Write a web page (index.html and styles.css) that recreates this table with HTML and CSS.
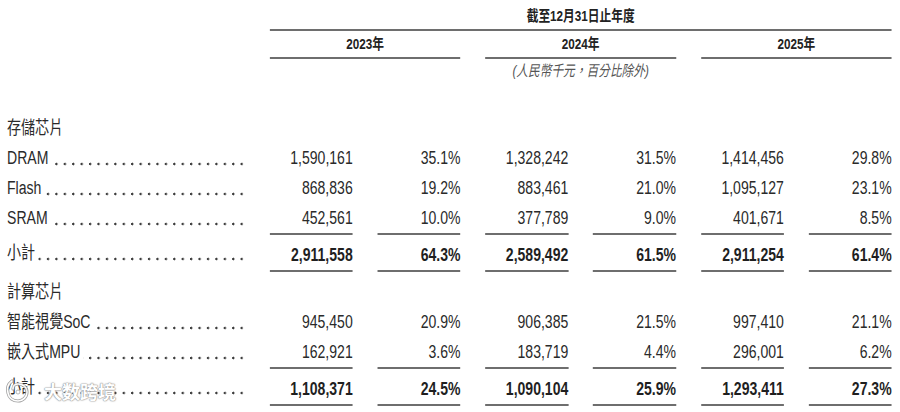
FILE: index.html
```html
<!DOCTYPE html>
<html lang="zh-Hant">
<head>
<meta charset="utf-8">
<title>收入明細</title>
<link rel="stylesheet" href="styles.css">
</head>
<body>
<div class="frame">
<div class="sheet">
  <div class="row head-title">
    <div class="title">截至12月31日止年度</div>
  </div>
  <div class="row head-years">
    <div class="year y1">2023年</div>
    <div class="year y2">2024年</div>
    <div class="year y3">2025年</div>
  </div>
  <div class="row head-unit">
    <div class="unit">(人民幣千元，百分比除外)</div>
  </div>

  <div class="section first">
    <div class="row cat"><div class="label">存儲芯片</div></div>
    <div class="row">
      <div class="label"><span class="name">DRAM</span><span class="dots"></span></div>
      <div class="num">1,590,161</div><div class="num">35.1%</div>
      <div class="num">1,328,242</div><div class="num">31.5%</div>
      <div class="num">1,414,456</div><div class="num">29.8%</div>
    </div>
    <div class="row">
      <div class="label"><span class="name">Flash</span><span class="dots"></span></div>
      <div class="num">868,836</div><div class="num">19.2%</div>
      <div class="num">883,461</div><div class="num">21.0%</div>
      <div class="num">1,095,127</div><div class="num">23.1%</div>
    </div>
    <div class="row">
      <div class="label"><span class="name">SRAM</span><span class="dots"></span></div>
      <div class="num">452,561</div><div class="num">10.0%</div>
      <div class="num">377,789</div><div class="num">9.0%</div>
      <div class="num">401,671</div><div class="num">8.5%</div>
    </div>
    <div class="row total">
      <div class="label"><span class="name">小計</span><span class="dots"></span></div>
      <div class="num">2,911,558</div><div class="num">64.3%</div>
      <div class="num">2,589,492</div><div class="num">61.5%</div>
      <div class="num">2,911,254</div><div class="num">61.4%</div>
    </div>
  </div>

  <div class="section second">
    <div class="row cat"><div class="label">計算芯片</div></div>
    <div class="row">
      <div class="label"><span class="name">智能視覺SoC</span><span class="dots"></span></div>
      <div class="num">945,450</div><div class="num">20.9%</div>
      <div class="num">906,385</div><div class="num">21.5%</div>
      <div class="num">997,410</div><div class="num">21.1%</div>
    </div>
    <div class="row">
      <div class="label"><span class="name">嵌入式MPU</span><span class="dots"></span></div>
      <div class="num">162,921</div><div class="num">3.6%</div>
      <div class="num">183,719</div><div class="num">4.4%</div>
      <div class="num">296,001</div><div class="num">6.2%</div>
    </div>
    <div class="row total">
      <div class="label"><span class="name">小計</span><span class="dots"></span></div>
      <div class="num">1,108,371</div><div class="num">24.5%</div>
      <div class="num">1,090,104</div><div class="num">25.9%</div>
      <div class="num">1,293,411</div><div class="num">27.3%</div>
    </div>
  </div>
</div>
</div>

<div class="watermark">
  <svg class="wm-icon" width="28" height="28" viewBox="0 0 28 28" aria-hidden="true">
    <path d="M8 4 C4 7 3 12 4 16 C5 21 9 24 14 24 C19 24 23 20 23 15 C23 10 19 7 14 7 C11 7 9 9 9 12" fill="none" stroke="#9a9a9a" stroke-width="3.2" stroke-linecap="round"/>
    <path d="M8 4 C4 7 3 12 4 16 C5 21 9 24 14 24 C19 24 23 20 23 15 C23 10 19 7 14 7 C11 7 9 9 9 12" fill="none" stroke="#ffffff" stroke-width="1.6" stroke-linecap="round"/>
    <circle cx="14" cy="15" r="2" fill="#ffffff" stroke="#9a9a9a" stroke-width="0.8"/>
  </svg>
  <span class="wm-text">大数跨境</span>
</div>
</body>
</html>
```

FILE: styles.css
```css
html, body {
  margin: 0;
  padding: 0;
  background: #ffffff;
  overflow: hidden;
}

body {
  width: 900px;
  height: 412px;
  position: relative;
  font-family: "Liberation Sans", "Noto Sans CJK TC", sans-serif;
  color: #2a2a2a;
}

.frame {
  width: 900px;
  height: 412px;
  overflow: hidden;
}

/* the source document is set horizontally condensed */
.sheet {
  width: 1154px;
  transform: scaleX(0.78);
  transform-origin: 0 0;
}

.row {
  display: grid;
  grid-template-columns: 305px repeat(6, 106.4px);
  column-gap: 31.8px;
  padding-left: 9px;
  font-size: 18px;
  line-height: 30px;
}

/* header */
.title {
  grid-column: 2 / 8;
  text-align: center;
  font-size: 15px;
  font-weight: bold;
  color: #222;
  padding-top: 3px;
  line-height: 26px;
  border-bottom: 2px solid #6e6e6e;
}

.year {
  text-align: center;
  font-size: 15px;
  font-weight: bold;
  color: #222;
  line-height: 26px;
  border-bottom: 2px solid #6e6e6e;
}

.y1 { grid-column: 2 / 4; }
.y2 { grid-column: 4 / 6; }
.y3 { grid-column: 6 / 8; }

.unit {
  grid-column: 4 / 6;
  text-align: center;
  font-size: 15px;
  font-style: italic;
  color: #555;
  line-height: 23px;
}

/* body */
.section.first { margin-top: 31px; }
.section.second { margin-top: 5px; }

.label {
  display: flex;
  white-space: nowrap;
  padding-right: 2px;
}

.name { flex: none; }

/* dot leader, aligned to the right edge of the label column */
.dots {
  flex: 1;
  min-width: 0;
  margin-left: 4px;
  background-image: radial-gradient(circle at 8.8px 21px, #3c3c3c 0, #3c3c3c 1.1px, rgba(60,60,60,0) 1.7px);
  background-size: 10.8px 30px;
  background-repeat: repeat-x;
  background-position: right top;
}

.num {
  text-align: right;
  white-space: nowrap;
}

.row.total > * {
  padding-top: 5px;
}

.row.total .num {
  font-weight: bold;
  color: #1f1f1f;
  border-top: 2px solid #6e6e6e;
  border-bottom: 2px solid #6e6e6e;
}

/* watermark overlay */
.watermark {
  position: absolute;
  left: 4px;
  top: 377px;
  display: flex;
  align-items: center;
  gap: 12px;
  opacity: 0.92;
}

.wm-icon { display: block; }

.wm-text {
  font-family: "Noto Sans CJK SC", sans-serif;
  font-size: 18px;
  font-weight: bold;
  color: #ffffff;
  text-shadow:
    0 0 1px #8a8a8a,
    0 0 1px #8a8a8a,
    0 0 2px #9a9a9a;
}
```
